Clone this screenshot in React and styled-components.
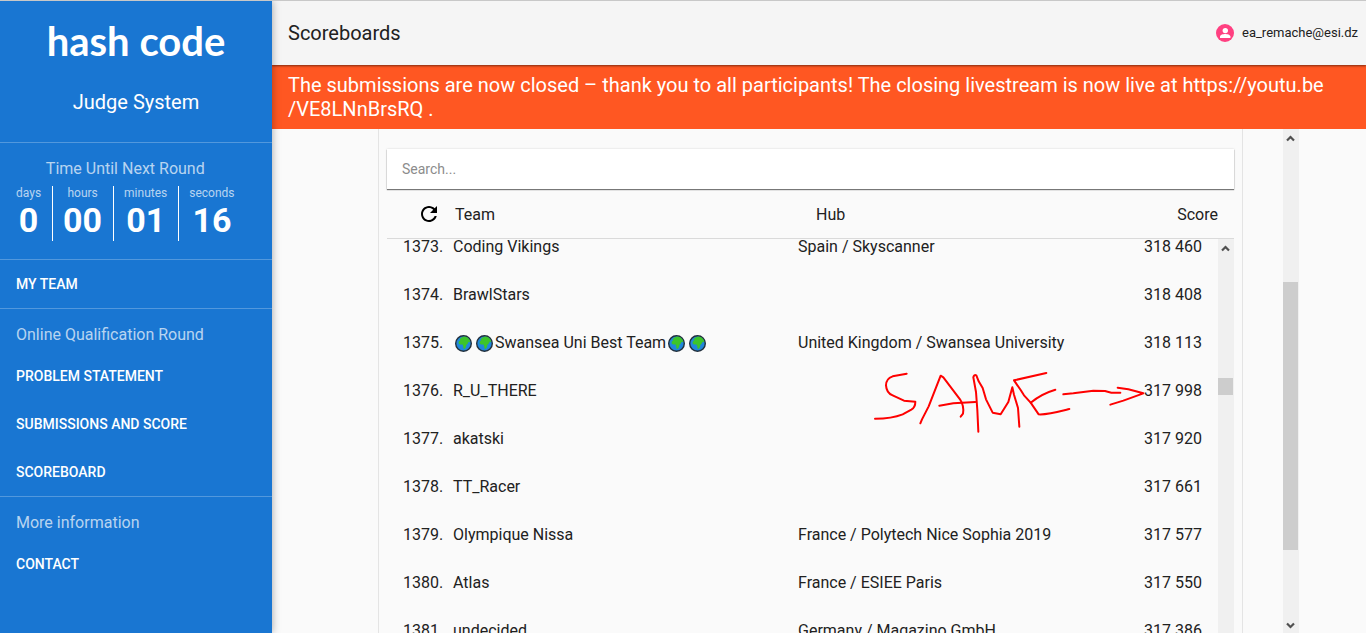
import React from "react";
import styled, { createGlobalStyle } from "styled-components";

const GlobalStyle = createGlobalStyle`
  * { box-sizing: border-box; }
  body {
    margin: 0;
    background: #fafafa;
    color: #212121;
    font-family: Roboto, "Liberation Sans", sans-serif;
    font-size: 16px;
    line-height: 24px;
  }
`;

const Page = styled.div`
  display: flex;
  height: 100vh;
  overflow: hidden;
  border-top: 1px solid #c8c8c8;
`;

const Sidebar = styled.aside`
  flex: 0 0 272px;
  z-index: 2;
  background: #1976d2;
  color: #fff;
  box-shadow: 0 0 8px rgba(0, 0, 0, 0.35);
`;

const Brand = styled.header`
  display: flex;
  flex-direction: column;
  align-items: center;
  height: 142px;
  padding-top: 16px;
  border-bottom: 1px solid rgba(255, 255, 255, 0.25);
`;

const Logo = styled.div`
  font-family: Lato, sans-serif;
  font-weight: 700;
  font-size: 40px;
  line-height: 48px;
`;

const BrandTitle = styled.div`
  margin-top: 25px;
  font-size: 20px;
  line-height: 24px;
`;

const Section = styled.section`
  padding: ${(p) => p.$pad || "0"};
  border-bottom: ${(p) => (p.$last ? "none" : "1px solid rgba(255, 255, 255, 0.25)")};
`;

const Countdown = styled.div`
  display: inline-flex;
  flex-direction: column;
  align-items: center;
  vertical-align: top;
`;

const SectionTitle = styled.div`
  height: 32px;
  padding: 3px 0;
  color: rgba(255, 255, 255, 0.7);
`;

const Units = styled.div`
  display: flex;
`;

const Unit = styled.div`
  display: flex;
  flex-direction: column;
  align-items: center;
  height: 55px;
  padding: 0 11px 0 10px;
  border-left: 1px solid #fff;
  &:first-child { padding-left: 0; border-left: none; }
  &:last-child { padding-right: 0; }
`;

const UnitLabel = styled.span`
  font-size: 12px;
  line-height: 14px;
  color: rgba(255, 255, 255, 0.7);
`;

const UnitValue = styled.span`
  font-size: 34px;
  line-height: 40px;
  font-weight: 700;
`;

const NavLink = styled.a`
  display: flex;
  align-items: center;
  height: 48px;
  padding: 0 16px;
  color: #fff;
  font-size: 14px;
  font-weight: 500;
  text-decoration: none;
`;

const NavHeading = styled(SectionTitle)`
  height: 43px;
  padding: 14px 16px 0;
`;

const Main = styled.main`
  flex: 1;
  min-width: 0;
  display: flex;
  flex-direction: column;
`;

const TopBar = styled.header`
  display: flex;
  flex: 0 0 64px;
  align-items: center;
  justify-content: space-between;
  z-index: 1;
  padding: 0 8px 0 16px;
  background: #f5f5f5;
  box-shadow: 0 1px 2px rgba(0, 0, 0, 0.5);
`;

const PageTitle = styled.h1`
  margin: 0;
  font-size: 20px;
  font-weight: 400;
`;

const User = styled.div`
  display: flex;
  align-items: center;
  gap: 8px;
  font-size: 13px;
`;

const Banner = styled.div`
  flex: 0 0 64px;
  padding: 8px 16px;
  background: #ff5722;
  color: #fff;
  font-size: 20px;
  line-height: 24px;
`;

const Viewport = styled.div`
  flex: 1;
  min-height: 0;
  display: flex;
  padding: 0 67px 0 106px;
`;

const Card = styled.section`
  flex: 1;
  min-width: 0;
  display: flex;
  flex-direction: column;
  margin-right: 40px;
  padding: 20px 8px 0;
  overflow: hidden;
  border-left: 1px solid #e4e4e4;
  border-right: 1px solid #e4e4e4;
`;

const Search = styled.input`
  flex: 0 0 40px;
  width: 100%;
  padding: 0 15px;
  border: none;
  background: #fff;
  box-shadow: 0 1px 1px rgba(0, 0, 0, 0.5), 0 0 2px rgba(0, 0, 0, 0.15);
  font: 14px Roboto, sans-serif;
  &::placeholder { color: #8c8c8c; opacity: 1; }
`;

const Table = styled.table`
  width: 100%;
  table-layout: fixed;
  border-collapse: collapse;
`;

const TableHeader = styled.div`
  flex: 0 0 50px;
  border-bottom: 1px solid #dadada;
`;

const HeadCell = styled.th`
  height: 49px;
  width: ${(p) => p.$width || "auto"};
  padding: ${(p) => p.$pad || "2px 0 0"};
  font-weight: 400;
  text-align: ${(p) => p.$align || "left"};
`;

const RefreshButton = styled.button`
  display: block;
  margin: 0;
  padding: 0;
  border: none;
  background: none;
  svg { display: block; }
`;

const Rows = styled.div`
  flex: 1;
  min-height: 0;
  display: flex;
  overflow: hidden;
`;

const RowsClip = styled.div`
  flex: 1;
  min-width: 0;
  table { margin-top: -16px; }
`;

const Cell = styled.td`
  position: relative;
  height: 48px;
  width: ${(p) => p.$width || "auto"};
  padding: ${(p) => p.$pad || "0"};
  text-align: ${(p) => p.$align || "left"};
  white-space: nowrap;
`;

const TeamName = styled.span`
  display: inline-flex;
  align-items: center;
  vertical-align: middle;
`;

const GlobeIcon = styled.svg`
  width: 17px;
  height: 17px;
  margin: 0 2px;
`;

const Annotation = styled.svg`
  position: absolute;
  top: -1px;
  right: 70px;
  z-index: 1;
  width: 280px;
  height: 72px;
  pointer-events: none;
`;

const Track = styled.div`
  flex: 0 0 16px;
  display: flex;
  flex-direction: column;
  background: #f0f0f0;
`;

const Arrow = styled.svg`
  flex: 0 0 17px;
  width: 15px;
`;

const Gap = styled.div`
  flex: ${(p) => p.$grow} 0 0;
`;

const Thumb = styled.div`
  flex: ${(p) => p.$flex};
  margin-right: 1px;
  background: #cdcdcd;
`;

const units = [
  ["days", "0"],
  ["hours", "00"],
  ["minutes", "01"],
  ["seconds", "16"],
];

const teams = [
  { rank: 1373, name: "Coding Vikings", hub: "Spain / Skyscanner", score: "318 460" },
  { rank: 1374, name: "BrawlStars", hub: "", score: "318 408" },
  { rank: 1375, name: "Swansea Uni Best Team", globes: true, hub: "United Kingdom / Swansea University", score: "318 113" },
  { rank: 1376, name: "R_U_THERE", hub: "", score: "317 998", marked: true },
  { rank: 1377, name: "akatski", hub: "", score: "317 920" },
  { rank: 1378, name: "TT_Racer", hub: "", score: "317 661" },
  { rank: 1379, name: "Olympique Nissa", hub: "France / Polytech Nice Sophia 2019", score: "317 577" },
  { rank: 1380, name: "Atlas", hub: "France / ESIEE Paris", score: "317 550" },
  { rank: 1381, name: "undecided", hub: "Germany / Magazino GmbH", score: "317 386" },
];

function Globe() {
  return (
    <GlobeIcon viewBox="0 0 17 17" aria-hidden="true">
      <circle cx="8.5" cy="8.5" r="7.8" fill="#2087dc" stroke="#23303c" strokeWidth="1.4" />
      <path
        d="M4.5 4.200 6.800 2.200 9.800 1.600 12.600 2.600 14.600 4.800 15.200 7.200 13.600 6.800 12.800 8.600 11.300 10 11 12 9.600 13.900 8.500 13.600 8.200 11.200 7.500 9.500 5 9.600 3.600 8.500 3.800 6.400 5.300 5.300z"
        fill="#3dc42b"
      />
    </GlobeIcon>
  );
}

function SameNote() {
  return (
    <Annotation
      viewBox="24 18 840 216"
      fill="none"
      stroke="#fe0000"
      strokeWidth="6"
      strokeLinecap="round"
      strokeLinejoin="round"
      aria-hidden="true"
    >
      <path d="M140 41 98 49C84 54 78 64 78 76C79 92 85 101 98 106L132 122L166 125C166 136 164 143 154 149L128 163C108 171 88 176 45 176" />
      <path d="M181 190 186 178 206 139 242 47 250 52 300 118C309 132 311 150 309 161L302 170" />
      <path d="M238 137 280 130 346 126" />
      <path d="M355 215 352 150 348 96 340 52Q342 43 349 46L356 64 368 84 378 118 398 158 422 163 445 126 457 82 462 104 474 144 478 200" />
      <path d="M559 39 462 61 482 90 492 106 512 128 536 163C560 165 600 154 628 147" />
      <path d="M512 128Q545 101 586 89" />
      <path d="M610 103 640 100 700 92 735 93 754 98 781 98" />
      <path d="M773 83 805 88 850 100 790 122 751 134" />
    </Annotation>
  );
}

function ScrollArrow({ down }) {
  return (
    <Arrow viewBox="0 0 15 17" aria-hidden="true">
      <path
        d={down ? "M4 7.500 7.500 11 11 7.500" : "M4 11.500 7.500 8 11 11.500"}
        fill="none"
        stroke="#505050"
        strokeWidth="2.200"
      />
    </Arrow>
  );
}

export default function App() {
  return (
    <>
      <GlobalStyle />
      <Page>
        <Sidebar>
          <Brand>
            <Logo>hash code</Logo>
            <BrandTitle>Judge System</BrandTitle>
          </Brand>
          <Section $pad="11px 16px 18px">
            <Countdown>
              <SectionTitle>Time Until Next Round</SectionTitle>
              <Units>
                {units.map(([label, value]) => (
                  <Unit key={label}>
                    <UnitLabel>{label}</UnitLabel>
                    <UnitValue>{value}</UnitValue>
                  </Unit>
                ))}
              </Units>
            </Countdown>
          </Section>
          <nav>
            <Section>
              <NavLink href="#team">MY TEAM</NavLink>
            </Section>
            <Section>
              <NavHeading>Online Qualification Round</NavHeading>
              <NavLink href="#problem">PROBLEM STATEMENT</NavLink>
              <NavLink href="#submissions">SUBMISSIONS AND SCORE</NavLink>
              <NavLink href="#scoreboard">SCOREBOARD</NavLink>
            </Section>
            <Section $last>
              <NavHeading>More information</NavHeading>
              <NavLink href="#contact">CONTACT</NavLink>
            </Section>
          </nav>
        </Sidebar>
        <Main>
          <TopBar>
            <PageTitle>Scoreboards</PageTitle>
            <User>
              <svg width="18" height="18" viewBox="0 0 18 18" aria-hidden="true">
                <circle cx="9" cy="9" r="9" fill="#ff4081" />
                <circle cx="9.3" cy="6.6" r="2.700" fill="#fff" />
                <path d="M4 14v-1.500c0-1.700 3.200-2.500 5.200-2.500s5.200.8 5.200 2.500V14z" fill="#fff" />
              </svg>
              <span>ea_remache@esi.dz</span>
            </User>
          </TopBar>
          <Banner>
            The submissions are now closed – thank you to all participants! The closing livestream is now live at
            https://youtu.be<wbr />/VE8LNnBrsRQ .
          </Banner>
          <Viewport>
            <Card>
              <Search type="search" placeholder="Search..." aria-label="Search" />
              <TableHeader>
                <Table>
                  <thead>
                    <tr>
                      <HeadCell $width="68px" $pad="0 0 0 30px">
                        <RefreshButton type="button" aria-label="Refresh">
                          <svg width="24" height="24" viewBox="0 0 24 24" aria-hidden="true">
                            <path d="M17.650 6.350C16.200 4.900 14.210 4 12 4c-4.420 0-7.990 3.580-7.990 8s3.570 8 7.990 8c3.730 0 6.840-2.550 7.730-6h-2.080c-.820 2.330-3.040 4-5.650 4-3.310 0-6-2.690-6-6s2.690-6 6-6c1.660 0 3.140.690 4.220 1.780L13 11h7V4l-2.350 2.350z" />
                          </svg>
                        </RefreshButton>
                      </HeadCell>
                      <HeadCell>Team</HeadCell>
                      <HeadCell>Hub</HeadCell>
                      <HeadCell $width="57px" $pad="2px 16px 0 0" $align="right">
                        Score
                      </HeadCell>
                    </tr>
                  </thead>
                </Table>
              </TableHeader>
              <Rows>
                <RowsClip>
                  <Table aria-label="Scoreboard">
                    <tbody>
                      {teams.map((team) => (
                        <tr key={team.rank}>
                          <Cell $width="66px" $pad="0 0 0 16px">
                            {team.rank}.
                          </Cell>
                          <Cell>
                            {team.globes ? (
                              <TeamName>
                                <Globe />
                                <Globe />
                                {team.name}
                                <Globe />
                                <Globe />
                              </TeamName>
                            ) : (
                              team.name
                            )}
                          </Cell>
                          <Cell>{team.hub}</Cell>
                          <Cell $width="75px" $pad="0 16px 0 0" $align="right">
                            {team.score}
                            {team.marked && <SameNote />}
                          </Cell>
                        </tr>
                      ))}
                    </tbody>
                  </Table>
                </RowsClip>
                <Track>
                  <ScrollArrow />
                  <Gap $grow={122} />
                  <Thumb $flex="0 0 17px" />
                  <Gap $grow={238} />
                </Track>
              </Rows>
            </Card>
            <Track>
              <ScrollArrow />
              <Gap $grow={136} />
              <Thumb $flex="268 0 0" />
              <Gap $grow={66} />
              <ScrollArrow down />
            </Track>
          </Viewport>
        </Main>
      </Page>
    </>
  );
}
